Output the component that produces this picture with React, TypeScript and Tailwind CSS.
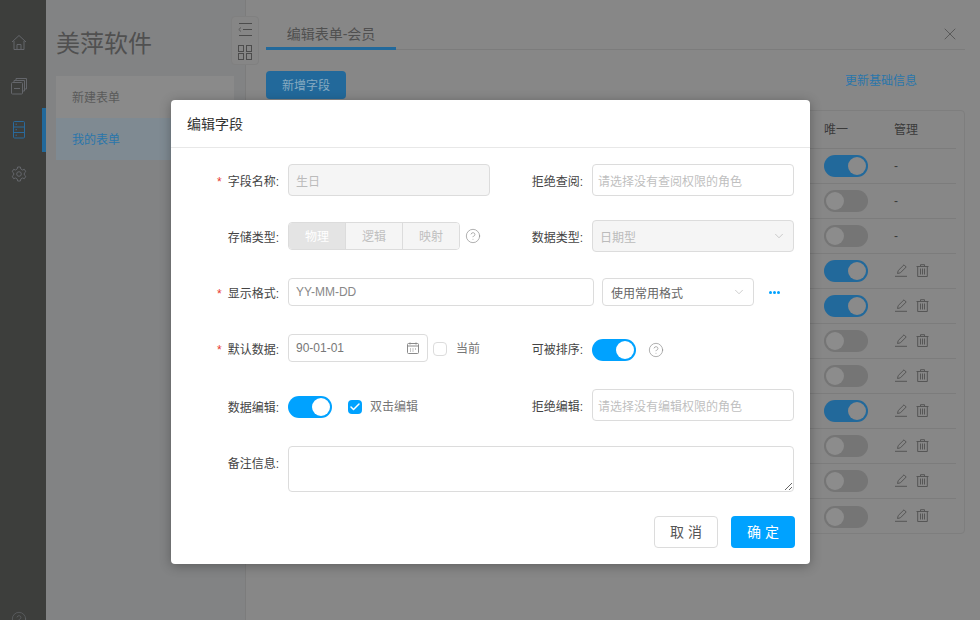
import { Check, ChevronDown, CircleHelp, X } from 'lucide-react';

const rows = [
  { on: true, edit: false },
  { on: false, edit: false },
  { on: false, edit: false },
  { on: true, edit: true },
  { on: true, edit: true },
  { on: false, edit: true },
  { on: false, edit: true },
  { on: true, edit: true },
  { on: false, edit: true },
  { on: false, edit: true },
  { on: false, edit: true },
];

const HomeIcon = () => (
  <svg width="16" height="17" viewBox="0 0 16 17" fill="none" stroke="currentColor" strokeWidth="1">
    <path d="M1 8 L8 1.5 L15 8" />
    <path d="M3 7v8.5h10V7" />
    <path d="M6 15.5v-5h4v5" />
  </svg>
);

const StackIcon = () => (
  <svg width="16" height="17" viewBox="0 0 16 17" fill="none" stroke="currentColor" strokeWidth="1">
    <rect x="0.5" y="4.5" width="11" height="11.5" rx="1" />
    <path d="M3 4V2.5h10.5V13H12" />
    <path d="M5 2V0.5h10.5V11H14" />
    <path d="M3 10.5h6" />
  </svg>
);

const ServerIcon = () => (
  <svg width="16" height="18" viewBox="0 0 16 18" fill="none" stroke="currentColor" strokeWidth="1">
    <rect x="2.5" y="0.5" width="11" height="16.5" rx="1" />
    <path d="M2.5 6h11M2.5 11.5h11" />
    <path d="M4.5 3.2h1.5M4.5 8.7h1.5M4.5 14.2h1.5" />
  </svg>
);

const GearIcon = () => (
  <svg width="16" height="16" viewBox="0 0 16 16" fill="none" stroke="currentColor" strokeWidth="1">
    <path d="M6.6 1h2.8l.4 2 1.7 1 1.9-.7 1.4 2.4-1.5 1.3v2l1.5 1.3-1.4 2.4-1.9-.7-1.7 1-.4 2H6.6l-.4-2-1.7-1-1.9.7-1.4-2.4L2.7 9V7L1.2 5.7l1.4-2.4 1.9.7 1.7-1z" />
    <circle cx="8" cy="8" r="2.3" />
  </svg>
);

const PencilIcon = () => (
  <svg width="13" height="13" viewBox="0 0 13 13" fill="none" stroke="#565656" strokeWidth="1">
    <path d="M2.5 9.5 L3.2 6.6 L9 0.8 L11.2 3 L5.4 8.8 Z" />
    <path d="M0 12.3h12" />
  </svg>
);

const TrashIcon = () => (
  <svg width="13" height="13" viewBox="0 0 13 13" fill="none" stroke="#565656" strokeWidth="1">
    <path d="M0.5 2.5h12M4.5 2.5V0.7h4v1.8" />
    <path d="M1.7 2.5v10h9.6v-10" />
    <path d="M4.5 4.5v6M6.5 4.5v6M8.5 4.5v6" />
  </svg>
);

const ListIcon = () => (
  <svg width="14" height="13" viewBox="0 0 14 13" fill="none" stroke="#4c4c4c" strokeWidth="1">
    <path d="M1 0.5h13M5 6.5h9M1 12.5h13" />
    <path d="M3 4.5 L0.8 6.5 L3 8.5" stroke="#5b5b5b" />
  </svg>
);

const GridIcon = () => (
  <svg width="14" height="15" viewBox="0 0 14 15" fill="none" stroke="#4c4c4c" strokeWidth="1">
    <rect x="0.5" y="0.5" width="5" height="6" />
    <rect x="8.5" y="0.5" width="5" height="6" />
    <rect x="0.5" y="8.5" width="5" height="6" />
    <rect x="8.5" y="8.5" width="5" height="6" />
  </svg>
);

const CalendarIcon = () => (
  <svg width="12" height="12" viewBox="0 0 12 12" fill="none" stroke="#8a8a8a" strokeWidth="1">
    <rect x="0.5" y="1.5" width="11" height="10" rx="1" />
    <path d="M0.5 4h11M3 0.5v2M9 0.5v2" />
    <path d="M3 7h1M5.5 7h1M8 7h1M3 9h1M5.5 9h1" />
  </svg>
);

// toggle in the modal
const Toggle = ({ className }: { className?: string }) => (
  <div className={`flex h-[22px] w-[44px] shrink-0 items-center justify-end rounded-full bg-[#00a2ff] px-[2px] ${className ?? ''}`}>
    <div className="h-[18px] w-[18px] rounded-full bg-white" />
  </div>
);

// dimmed toggle behind the modal
const DimToggle = ({ on }: { on: boolean }) =>
  on ? (
    <div className="flex h-[22px] w-[44px] items-center justify-end rounded-full bg-[#22699b] px-[2px]">
      <div className="h-[18px] w-[18px] rounded-full bg-[#8a8a8a]" />
    </div>
  ) : (
    <div className="flex h-[22px] w-[44px] items-center rounded-full bg-[#757575] px-[2px]">
      <div className="h-[18px] w-[18px] rounded-full bg-[#8c8c8c]" />
    </div>
  );

const Label = ({ text, required, className = 'pt-1' }: { text: string; required?: boolean; className?: string }) => (
  <div className={`flex w-[117px] shrink-0 items-center justify-end pr-[9px] text-[#444] ${className}`}>
    {required && <span className="mr-[6px] text-[#e8392f]">*</span>}
    <span>{text}:</span>
  </div>
);

const RightLabel = ({ text, className = 'pt-1' }: { text: string; className?: string }) => (
  <div className={`w-[102px] shrink-0 pr-[9px] text-right text-[#444] ${className}`}>{text}:</div>
);

const Help = ({ className }: { className?: string }) => (
  <CircleHelp className={`h-4 w-4 shrink-0 text-[#8a8a8a] ${className ?? ''}`} strokeWidth={1} />
);

const App = () => {
  return (
    <div className="relative flex h-[620px] w-[980px] overflow-hidden bg-[#878787] font-['Liberation_Sans','Noto_Sans_CJK_SC',sans-serif] text-[12px]">
      {/* Left icon bar */}
      <div className="flex w-[46px] shrink-0 flex-col bg-[#3d3e3c] pt-5 text-[#64666b]">
        <div className="flex h-11 shrink-0 items-center border-r-4 border-transparent pl-[11px]"><HomeIcon /></div>
        <div className="flex h-11 shrink-0 items-center border-r-4 border-transparent pl-[11px]"><StackIcon /></div>
        <div className="flex h-11 shrink-0 items-center border-r-4 border-[#22699b] pl-[11px] text-[#2a6a9c]"><ServerIcon /></div>
        <div className="flex h-11 shrink-0 items-center border-r-4 border-transparent pl-[11px]"><GearIcon /></div>
        <div className="mt-[415px] shrink-0 pl-[11px]"><CircleHelp className="h-4 w-4" strokeWidth={1} /></div>
      </div>

      {/* Menu column */}
      <div className="w-[200px] shrink-0 border-r border-[#7c7c7c] bg-[#828384] pl-[10px]">
        <div className="flex h-[76px] items-center pt-3 text-2xl text-[#505050]">美萍软件</div>
        <div className="flex h-[42px] w-[178px] items-center bg-[#8a8a8a] pl-4 pt-[2px] text-[#5a5a5a]">新建表单</div>
        <div className="flex h-[42px] w-[178px] items-center bg-[#7f8a92] pl-4 pt-[2px] text-[#2a76ab]">我的表单</div>
      </div>

      {/* Collapse / grid switch */}
      <div className="absolute left-[231px] top-4 flex h-[49px] w-[28px] flex-col items-center gap-[9px] rounded border border-[#808080] bg-[#868686] pt-[6px]">
        <ListIcon />
        <GridIcon />
      </div>

      {/* Main content */}
      <div className="flex min-w-0 flex-1 flex-col pl-5 pr-[15px]">
        <div className="flex h-[50px] shrink-0 items-stretch justify-between border-b border-[#7c7c7c]">
          <div className="flex h-[50px] w-[130px] items-center justify-center border-b-[3px] border-[#22699b] pt-5 text-sm text-[#505050]">
            编辑表单-会员
          </div>
          <div className="flex items-center pr-[5px] pt-[18px]">
            <X className="h-5 w-5 text-[#505050]" strokeWidth={1} />
          </div>
        </div>

        <div className="mt-[21px] flex items-center justify-between pr-[48px]">
          <div className="flex h-7 w-20 items-center justify-center rounded bg-[#22699b] pt-[2px] text-[#86a9c0]">新增字段</div>
          <span className="mb-2 text-[#2a76ab]">更新基础信息</span>
        </div>

        <div className="mt-[11px] h-[424px] rounded border border-[#7e7e7e] pr-2 text-[#3a3a3a]">
          <div className="flex h-[38px] items-center border-b border-[#7c7c7c]">
            <div className="flex-1" />
            <div className="w-[70px]">唯一</div>
            <div className="w-[62px]">管理</div>
          </div>
          {rows.map((row, i) => (
            <div key={i} className="flex h-[35px] items-center border-b border-[#7c7c7c] last:border-b-0">
              <div className="flex-1" />
              <div className="w-[70px]"><DimToggle on={row.on} /></div>
              <div className="w-[62px]">
                {row.edit ? (
                  <div className="-mt-[2px] flex items-center gap-2 pl-px">
                    <PencilIcon />
                    <TrashIcon />
                  </div>
                ) : (
                  '-'
                )}
              </div>
            </div>
          ))}
        </div>
      </div>

      {/* Edit field modal */}
      <div className="absolute left-[171px] top-[100px] h-[464px] w-[639px] rounded bg-white shadow-[0_2px_12px_rgba(0,0,0,0.3)]">
        <div className="flex h-[48px] items-center border-b border-[#e8e8e8] pl-4 text-sm text-[#333]">编辑字段</div>

        <div className="flex flex-col pt-4">
          <div className="flex h-8 items-center">
            <div className="flex w-[319px] shrink-0 items-center">
              <Label text="字段名称" required />
              <input
                disabled
                value="生日"
                className="h-8 w-[202px] rounded border border-[#dcdcdc] bg-[#f5f5f5] px-[7px] text-[#bbb]"
              />
            </div>
            <RightLabel text="拒绝查阅" />
            <input
              placeholder="请选择没有查阅权限的角色"
              className="h-8 w-[202px] rounded border border-[#dcdcdc] px-[5px] pt-[3px] placeholder:text-[#bfbfbf]"
            />
          </div>

          <div className="mt-6 flex h-8 items-center">
            <div className="flex w-[319px] shrink-0 items-center">
              <Label text="存储类型" />
              <div className="flex h-7 w-[172px] overflow-hidden rounded border border-[#dcdcdc] text-center leading-[29px]">
                <div className="flex-1 bg-[#e4e4e4] text-white">物理</div>
                <div className="flex-1 border-l border-[#dcdcdc] bg-[#f5f5f5] text-[#c0c0c0]">逻辑</div>
                <div className="flex-1 border-l border-[#dcdcdc] bg-[#f5f5f5] text-[#c0c0c0]">映射</div>
              </div>
              <Help className="ml-[5px]" />
            </div>
            <RightLabel text="数据类型" />
            <div className="flex h-8 w-[202px] items-center justify-between rounded border border-[#dcdcdc] bg-[#f5f5f5] pl-[7px] pr-[7px] text-[#bbb]">
              <span className="pt-1">日期型</span>
              <ChevronDown className="h-[14px] w-[14px] text-[#aaa]" strokeWidth={1} />
            </div>
          </div>

          <div className="mt-6 flex h-8 items-center">
            <Label text="显示格式" required />
            <input
              readOnly
              value="YY-MM-DD"
              className="h-7 w-[306px] rounded border border-[#dcdcdc] px-[7px] text-[#888]"
            />
            <div className="ml-2 flex h-7 w-[152px] items-center justify-between rounded border border-[#dcdcdc] pl-2 pr-[7px] text-[#666]">
              <span className="pt-1">使用常用格式</span>
              <ChevronDown className="h-[14px] w-[14px] text-[#aaa]" strokeWidth={1} />
            </div>
            <div className="ml-[15px] flex gap-px">
              <div className="h-[3px] w-[3px] rounded-full bg-[#00a2ff]" />
              <div className="h-[3px] w-[3px] rounded-full bg-[#00a2ff]" />
              <div className="h-[3px] w-[3px] rounded-full bg-[#00a2ff]" />
            </div>
          </div>

          <div className="mt-6 flex h-8 items-center">
            <div className="flex w-[319px] shrink-0 items-center">
              <Label text="默认数据" required />
              <div className="flex h-7 w-[140px] items-center justify-between rounded border border-[#dcdcdc] pl-[7px] pr-[8px] text-[#777]">
                90-01-01
                <CalendarIcon />
              </div>
              <div className="ml-[5px] mt-[2px] h-[14px] w-[14px] rounded-sm border border-[#dcdcdc]" />
              <span className="ml-[9px] mt-[2px] text-[#777]">当前</span>
            </div>
            <RightLabel text="可被排序" className="mt-[3px]" />
            <Toggle className="mt-[4px]" />
            <Help className="ml-3 mt-[4px]" />
          </div>

          <div className="mt-[25px] flex h-8 items-center">
            <div className="mt-1 flex w-[319px] shrink-0 items-center">
              <Label text="数据编辑" className="pt-[2px]" />
              <Toggle />
              <div className="ml-4 flex h-[14px] w-[14px] items-center justify-center rounded-sm bg-[#00a2ff]">
                <Check className="h-3 w-3 text-white" strokeWidth={3} />
              </div>
              <span className="ml-2 text-[#777]">双击编辑</span>
            </div>
            <RightLabel text="拒绝编辑" />
            <input
              placeholder="请选择没有编辑权限的角色"
              className="h-8 w-[202px] rounded border border-[#dcdcdc] px-[5px] pt-[3px] placeholder:text-[#bfbfbf]"
            />
          </div>

          <div className="mt-[25px] flex h-[46px] items-start">
            <Label text="备注信息" className="pt-[9px]" />
            <textarea className="h-[46px] w-[506px] rounded border border-[#dcdcdc]" />
          </div>

          <div className="mt-6 flex justify-end gap-[13px] pr-[15px] text-sm">
            <button className="h-8 w-16 rounded border border-[#dcdcdc] bg-white text-[#555]">取 消</button>
            <button className="h-8 w-16 rounded bg-[#00a2ff] text-white">确 定</button>
          </div>
        </div>
      </div>
    </div>
  );
};

export default App;
